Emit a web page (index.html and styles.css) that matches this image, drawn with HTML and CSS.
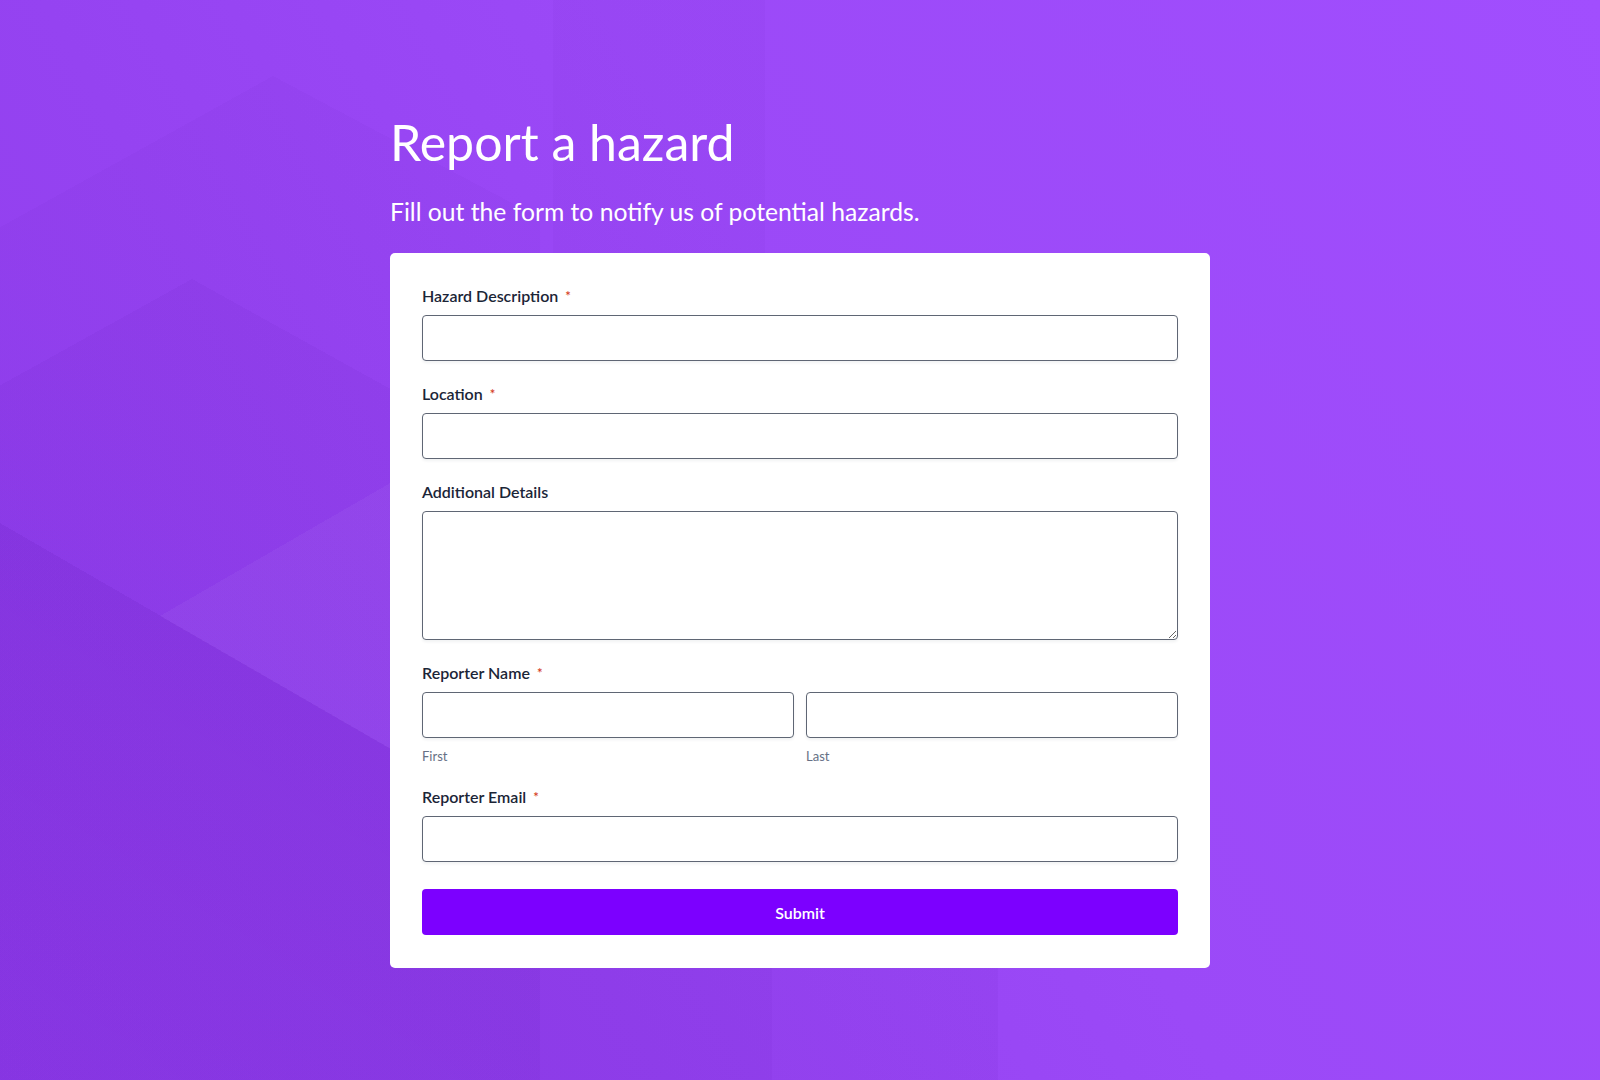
FILE: index.html
```html
<!DOCTYPE html>
<html lang="en">
<head>
<meta charset="utf-8">
<title>Report a hazard</title>
<link rel="stylesheet" href="styles.css">
</head>
<body>
<main class="page">
  <h1 class="title">Report a hazard</h1>
  <p class="subtitle">Fill out the form to notify us of potential hazards.</p>
  <form class="card">
    <div class="field">
      <label class="label">Hazard Description <span class="req">*</span></label>
      <input class="input" type="text">
    </div>
    <div class="field">
      <label class="label">Location <span class="req">*</span></label>
      <input class="input" type="text">
    </div>
    <div class="field">
      <label class="label">Additional Details</label>
      <textarea class="textarea"></textarea>
    </div>
    <div class="field">
      <label class="label">Reporter Name <span class="req">*</span></label>
      <div class="name-row">
        <div class="name-col">
          <input class="input" type="text">
          <span class="sublabel">First</span>
        </div>
        <div class="name-col">
          <input class="input" type="text">
          <span class="sublabel">Last</span>
        </div>
      </div>
    </div>
    <div class="field">
      <label class="label">Reporter Email <span class="req">*</span></label>
      <input class="input" type="email">
    </div>
    <button class="submit" type="button">Submit</button>
  </form>
</main>
</body>
</html>
```
FILE: styles.css
```css
html, body {
  margin: 0;
  padding: 0;
}
body {
  min-height: 1080px;
  font-family: Lato, "Noto Sans", sans-serif;
  background-color: #9845f2;
  background-repeat: no-repeat;
  background-image:
    /* top band */
    linear-gradient(rgba(70, 0, 150, 0.035), rgba(70, 0, 150, 0.035)),
    /* bottom bands */
    linear-gradient(rgba(70, 0, 150, 0.09), rgba(70, 0, 150, 0.09)),
    linear-gradient(rgba(70, 0, 150, 0.05), rgba(70, 0, 150, 0.05)),
    /* lighter wedge opening right */
    conic-gradient(from 60deg at 160px 616px, rgba(255, 255, 255, 0.04) 0deg 60deg, rgba(255, 255, 255, 0) 60deg),
    /* diamond wedges */
    conic-gradient(from 119deg at 192px 279px, rgba(70, 0, 150, 0.05) 0deg 122deg, rgba(70, 0, 150, 0) 122deg),
    conic-gradient(from 118deg at 273px 76px, rgba(70, 0, 150, 0.035) 0deg 123deg, rgba(70, 0, 150, 0) 123deg),
    /* dark region below diagonal */
    linear-gradient(210deg, rgba(60, 0, 140, 0) 723px, rgba(60, 0, 140, 0.08) 723px, rgba(60, 0, 140, 0.03) 1205px),
    /* base */
    linear-gradient(60deg, #8f3cec 0%, #9543f1 30%, #9b49f7 55%, #a14efe 100%);
  background-size:
    212px 253px,
    232px 114px,
    226px 114px,
    540px 1080px,
    540px 1080px,
    540px 1080px,
    540px 1080px,
    100% 100%;
  background-position:
    553px 0,
    540px 966px,
    772px 966px,
    0 0,
    0 0,
    0 0,
    0 0,
    0 0;
}
.page {
  width: 820px;
  margin: 0 auto;
  padding: 110px 0 114px;
}
.title {
  margin: 0;
  font-size: 50px;
  line-height: 64px;
  font-weight: 400;
  color: #ffffff;
}
.subtitle {
  margin: 22px 0 25px;
  font-size: 24.7px;
  line-height: 32px;
  font-weight: 400;
  color: #ffffff;
}
.card {
  background: #ffffff;
  border-radius: 5px;
  padding: 32px 32px 33px;
  display: flex;
  flex-direction: column;
}
.field {
  display: flex;
  flex-direction: column;
  margin-bottom: 22px;
}
.label {
  font-size: 16px;
  line-height: 22px;
  font-weight: 600;
  color: #1b2537;
  margin-bottom: 8px;
}
.req {
  color: #d43c22;
  font-size: 13px;
  margin-left: 3px;
  vertical-align: 1px;
}
.input, .textarea {
  box-sizing: border-box;
  width: 100%;
  height: 46px;
  margin: 0;
  border: 1px solid #5f6674;
  border-radius: 4px;
  background: #ffffff;
  box-shadow: 0 2px 3px rgba(20, 30, 50, 0.06);
  font-family: Lato, sans-serif;
  font-size: 16px;
  padding: 0 12px;
  outline: none;
}
.textarea {
  height: 129px;
  resize: vertical;
  padding: 10px 12px;
  display: block;
}
.name-row {
  display: grid;
  grid-template-columns: 1fr 1fr;
  column-gap: 12px;
}
.name-col {
  display: flex;
  flex-direction: column;
}
.sublabel {
  margin-top: 10px;
  font-size: 13px;
  line-height: 16px;
  color: #667085;
}
.submit {
  margin-top: 5px;
  height: 46px;
  border: none;
  border-radius: 4px;
  background: #7c00ff;
  color: #ffffff;
  font-family: Lato, sans-serif;
  font-size: 16px;
  font-weight: 600;
  cursor: pointer;
}
```
